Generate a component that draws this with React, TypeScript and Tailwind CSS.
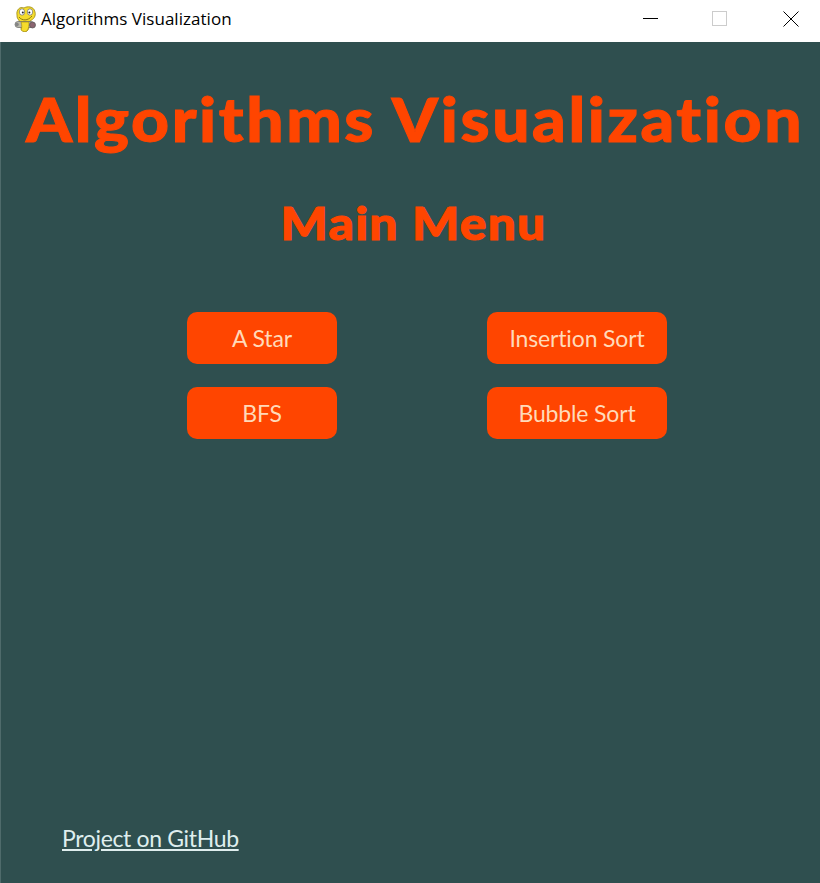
import React from 'react';

const latoFont = "font-['Lato',sans-serif] [font-variant-ligatures:none]";

const PygameIcon = () => (
  <svg viewBox="0 0 23 26" className="w-[23px] h-[26px]">
    <path d="M3 9 C2 4 6 0 10 2 C13 0 20 0 21 6 C22 10 20 13 16 15 C15 19 16 22 13 25 C10 26 7 25 7 22 C8 19 6 16 4 13 C3 12 3 10 3 9 Z" fill="#f5dc2c" stroke="#9a8712" strokeWidth="0.8" />
    <path d="M5 11 C8 15 14 15 18 10" fill="none" stroke="#8f7d10" strokeWidth="1" />
    <rect x="1" y="15.5" width="19" height="6" rx="3" fill="#b9b9ac" stroke="#666" strokeWidth="0.7" />
    <path d="M7 16 C8 19 8 22 7 24 C9 26 12 26 13 25 C15 22 15 19 15 16 Z" fill="#f5dc2c" stroke="#9a8712" strokeWidth="0.6" />
    <circle cx="3" cy="18.5" r="1.8" fill="#858585" />
    <circle cx="18.5" cy="19" r="3" fill="#8a6470" stroke="#555" strokeWidth="0.7" />
    <ellipse cx="8" cy="6" rx="2.7" ry="3.2" fill="#fff" stroke="#555" strokeWidth="0.6" />
    <ellipse cx="16" cy="6" rx="2.7" ry="3.2" fill="#fff" stroke="#555" strokeWidth="0.6" />
    <circle cx="8.8" cy="6.5" r="1" fill="#222" />
    <circle cx="15.4" cy="6.5" r="1" fill="#222" />
  </svg>
);

const TitleBar = () => (
  <div className="h-[42px] bg-white flex items-center pl-[14px] pb-[5px]">
    <PygameIcon />
    <span className="ml-[4px] text-[17px] text-black font-['Open_Sans',sans-serif] tracking-[0.03px]">Algorithms Visualization</span>
    <div className="ml-auto flex items-center">
      <div className="w-[15px] h-px bg-black mr-[54px]" />
      <div className="w-[15px] h-[15px] border border-[#cccccc] mr-[56px]" />
      <svg viewBox="0 0 16 16" className="w-4 h-4 mr-[21px]">
        <path d="M0.5 0.5 L15.5 15.5 M15.5 0.5 L0.5 15.5" stroke="#000" strokeWidth="1" />
      </svg>
    </div>
  </div>
);

const MenuButton = ({ label, className }: { label: string; className: string }) => (
  <button className={`h-[52px] bg-[#ff4500] rounded-[10px] text-[23px] tracking-[-0.15px] text-[#ffdab9] flex items-center justify-center ${className}`}>
    {label}
  </button>
);

const App = () => {
  return (
    <div className={`w-[820px] h-[883px] flex flex-col ${latoFont}`}>
      <TitleBar />
      <div className="flex-1 bg-[#2f4f4f] border-l border-[#4f6b6b] flex flex-col">
        <h1 className="mt-[40px] ml-[9px] text-center text-[61px] leading-[74px] font-black text-[#ff4500] tracking-[2.4px] whitespace-nowrap scale-x-[1.08] [-webkit-text-stroke:1px_#ff4500]">
          Algorithms Visualization
        </h1>
        <h2 className="mt-[39px] ml-[6px] text-center text-[46px] leading-[56px] font-black text-[#ff4500] tracking-[1.2px] scale-x-[1.08] [-webkit-text-stroke:1px_#ff4500]">
          Main Menu
        </h2>
        <div className="mt-[61px] ml-[186px] grid grid-cols-[150px_180px] gap-x-[150px] gap-y-[23px] w-fit">
          <MenuButton label="A Star" className="w-[150px]" />
          <MenuButton label="Insertion Sort" className="w-[180px]" />
          <MenuButton label="BFS" className="w-[150px]" />
          <MenuButton label="Bubble Sort" className="w-[180px]" />
        </div>
        <a className="mt-auto mb-[29px] ml-[61px] text-[23px] leading-[32px] tracking-[-0.35px] text-[#dfeeee] underline w-fit">
          Project on GitHub
        </a>
      </div>
    </div>
  );
};

export default App;
